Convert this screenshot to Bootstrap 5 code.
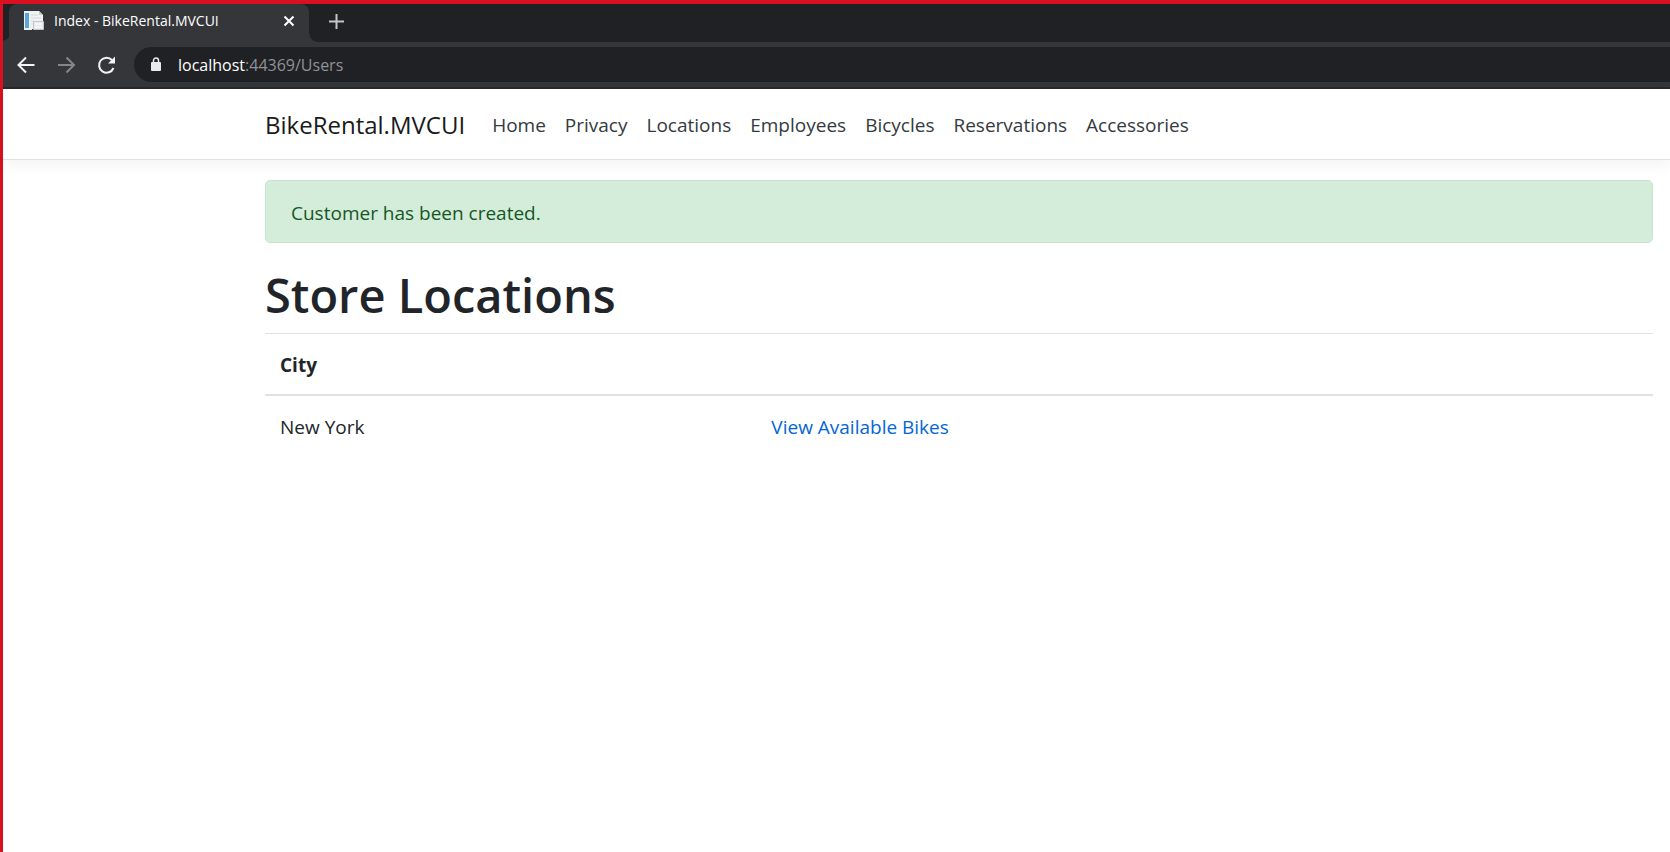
<!DOCTYPE html>
<html lang="en">
<head>
<meta charset="utf-8">
<meta name="viewport" content="width=device-width, initial-scale=1">
<title>Index - BikeRental.MVCUI</title>
<link href="https://cdn.jsdelivr.net/npm/bootstrap@5.3.0/dist/css/bootstrap.min.css" rel="stylesheet">
<style>
  body {
    font-family: "Open Sans", "Noto Sans", sans-serif;
    font-size: 19px;
    line-height: 30px;
    color: #212529;
  }
  .window-frame {
    border-top: 4px solid #d9101f;
    border-left: 3px solid #d9101f;
  }
  .tab-strip { background: #202124; height: 38px; padding-left: 6px; }
  .tab-item {
    position: relative;
    width: 300px;
    padding: 0 14px 5px;
    gap: 10px;
    background: #35363a;
    color: #fff;
    font-size: 14px;
    line-height: 20px;
    border-radius: 8px 8px 0 0;
  }
  .tab-item::before, .tab-item::after {
    content: "";
    position: absolute;
    bottom: 0;
    height: 8px;
  }
  .tab-item::before { left: -6px; width: 6px; background: radial-gradient(circle at 0 0, #202124 6px, #35363a 7px); }
  .tab-item::after { right: -8px; width: 8px; background: radial-gradient(circle at 100% 0, #202124 7px, #35363a 8px); }
  .icon-btn { background: none; border: 0; padding: 0; line-height: 0; color: #f1f3f4; }
  .icon-btn:disabled { color: #85868a; }
  .toolbar-row {
    background: #35363a;
    border-bottom: 2px solid #29292d;
    padding: 5px 0 5px 13px;
    gap: 20px;
  }
  .address-box {
    background: #202124;
    height: 35px;
    border-radius: 18px 0 0 18px;
    padding-left: 16px;
    margin-left: -2px;
    font-size: 16px;
    line-height: 24px;
    color: #fff;
  }
  .address-box a { color: #8f9296; }
  .address-box span { color: #fff; }
  .page-inset { padding-left: 262px; padding-right: 17px; }
  .site-nav {
    height: 71px;
    border-bottom: 1px solid #dee2e6;
    box-shadow: 0 5px 15px rgba(0, 0, 0, .05);
  }
  .site-nav .page-inset { padding-top: 2px; }
  .site-nav .navbar-brand { font-size: 24px; color: #1a1a1a; margin-right: 17px; }
  .site-nav .navbar-nav .nav-link { color: #343a40; padding: 0 9px 0 10px; }
  .notice-box {
    background: #d4edda;
    border: 1px solid #c3e6cb;
    border-radius: 5px;
    color: #155724;
    padding: 17px 25px 14px;
    margin: 20px 0 22px;
  }
  h1 { font-size: 47px; line-height: 60px; font-weight: 600; margin: 0 0 8px; }
  .city-table th, .city-table td { padding: 16px 15px 14px; border: 0; color: #212529; }
  .city-table th { border-top: 1px solid #dee2e6; border-bottom: 2px solid #dee2e6; font-weight: 700; }
  .city-table col:first-child { width: 35.4%; }
  .city-table a { color: #0366d6; }
</style>
</head>
<body>
<div class="window-frame min-vh-100">
  <header>
    <div class="tab-strip d-flex">
      <div class="tab-item d-flex align-items-center">
        <svg width="21" height="21" viewBox="0 0 21 21" aria-hidden="true">
          <path d="M1 1h8v19H1z" fill="#e9f1f6"/>
          <path d="M2 3h4v15H2z" fill="#5aa7d6"/>
          <path d="M6 1h10l4 4v14H6z" fill="#f1f2f4"/>
          <path d="M16 1v4h4z" fill="#c9cdd2"/>
          <path d="M8 5h7M8 8h10M8 11h3M8 14h2" stroke="#d3d8df"/>
          <path d="M10.500 11.500h10v8h-10z" fill="#e8ebef" stroke="#bfc6ce"/>
          <path d="M12 14h7M12 17h7" stroke="#fff"/>
        </svg>
        <span class="flex-grow-1 text-nowrap">Index - BikeRental.MVCUI</span>
        <button class="icon-btn" type="button" aria-label="Close tab">
          <svg width="12" height="12" viewBox="0 0 12 12" fill="none" stroke="#fff" stroke-width="2"><path d="M1.500 1.500l9 9M10.500 1.500l-9 9"/></svg>
        </button>
      </div>
      <button class="icon-btn ms-3 ps-1 pb-1" type="button" aria-label="New tab">
        <svg width="15" height="15" viewBox="0 0 15 15" fill="none" stroke="#c4c6c9" stroke-width="2"><path d="M7.500 0v15M0 7.500h15"/></svg>
      </button>
    </div>
    <div class="toolbar-row d-flex align-items-center">
      <button class="icon-btn" type="button" aria-label="Back">
        <svg width="20" height="20" viewBox="0 0 20 20" fill="none" stroke="currentColor" stroke-width="2"><path d="M18.500 10H3M10 2.500L2.500 10l7.500 7.500"/></svg>
      </button>
      <button class="icon-btn" type="button" aria-label="Forward" disabled>
        <svg width="20" height="20" viewBox="0 0 20 20" fill="none" stroke="currentColor" stroke-width="2"><path d="M2 10H17.500M10.500 2.500l7.500 7.500-7.500 7.500"/></svg>
      </button>
      <button class="icon-btn" type="button" aria-label="Reload">
        <svg width="20" height="20" viewBox="0 0 20 20"><path d="M17.500 13A7.500 7.500 0 1 1 16 5" fill="none" stroke="currentColor" stroke-width="2"/><path d="M19 1.500v7h-7z" fill="currentColor"/></svg>
      </button>
      <div class="address-box d-flex align-items-center flex-grow-1">
        <svg width="12" height="15" viewBox="0 0 12 15" aria-hidden="true"><rect x="1" y="5" width="10" height="9" rx="1" fill="#e8eaed"/><path d="M3.500 6V3.500a2.500 2.500 0 0 1 5 0V6" fill="none" stroke="#e8eaed" stroke-width="1.500"/></svg>
        <a class="ms-3 text-decoration-none" href="#"><span>localhost</span>:44369/Users</a>
      </div>
    </div>
  </header>

  <nav class="site-nav navbar navbar-expand p-0" aria-label="Main">
    <div class="page-inset w-100 d-flex align-items-center">
      <a class="navbar-brand p-0" href="#">BikeRental.MVCUI</a>
      <ul class="navbar-nav">
        <li class="nav-item"><a class="nav-link" href="#">Home</a></li>
        <li class="nav-item"><a class="nav-link" href="#">Privacy</a></li>
        <li class="nav-item"><a class="nav-link" href="#">Locations</a></li>
        <li class="nav-item"><a class="nav-link" href="#">Employees</a></li>
        <li class="nav-item"><a class="nav-link" href="#">Bicycles</a></li>
        <li class="nav-item"><a class="nav-link" href="#">Reservations</a></li>
        <li class="nav-item"><a class="nav-link" href="#">Accessories</a></li>
      </ul>
    </div>
  </nav>

  <main class="page-inset">
    <div class="notice-box" role="alert">Customer has been created.</div>
    <h1>Store Locations</h1>
    <table class="city-table table">
      <colgroup><col><col></colgroup>
      <thead><tr><th scope="col">City</th><th></th></tr></thead>
      <tbody><tr><td>New York</td><td><a class="text-decoration-none" href="#">View Available Bikes</a></td></tr></tbody>
    </table>
  </main>
</div>
<script src="https://cdn.jsdelivr.net/npm/bootstrap@5.3.0/dist/js/bootstrap.bundle.min.js"></script>
</body>
</html>
